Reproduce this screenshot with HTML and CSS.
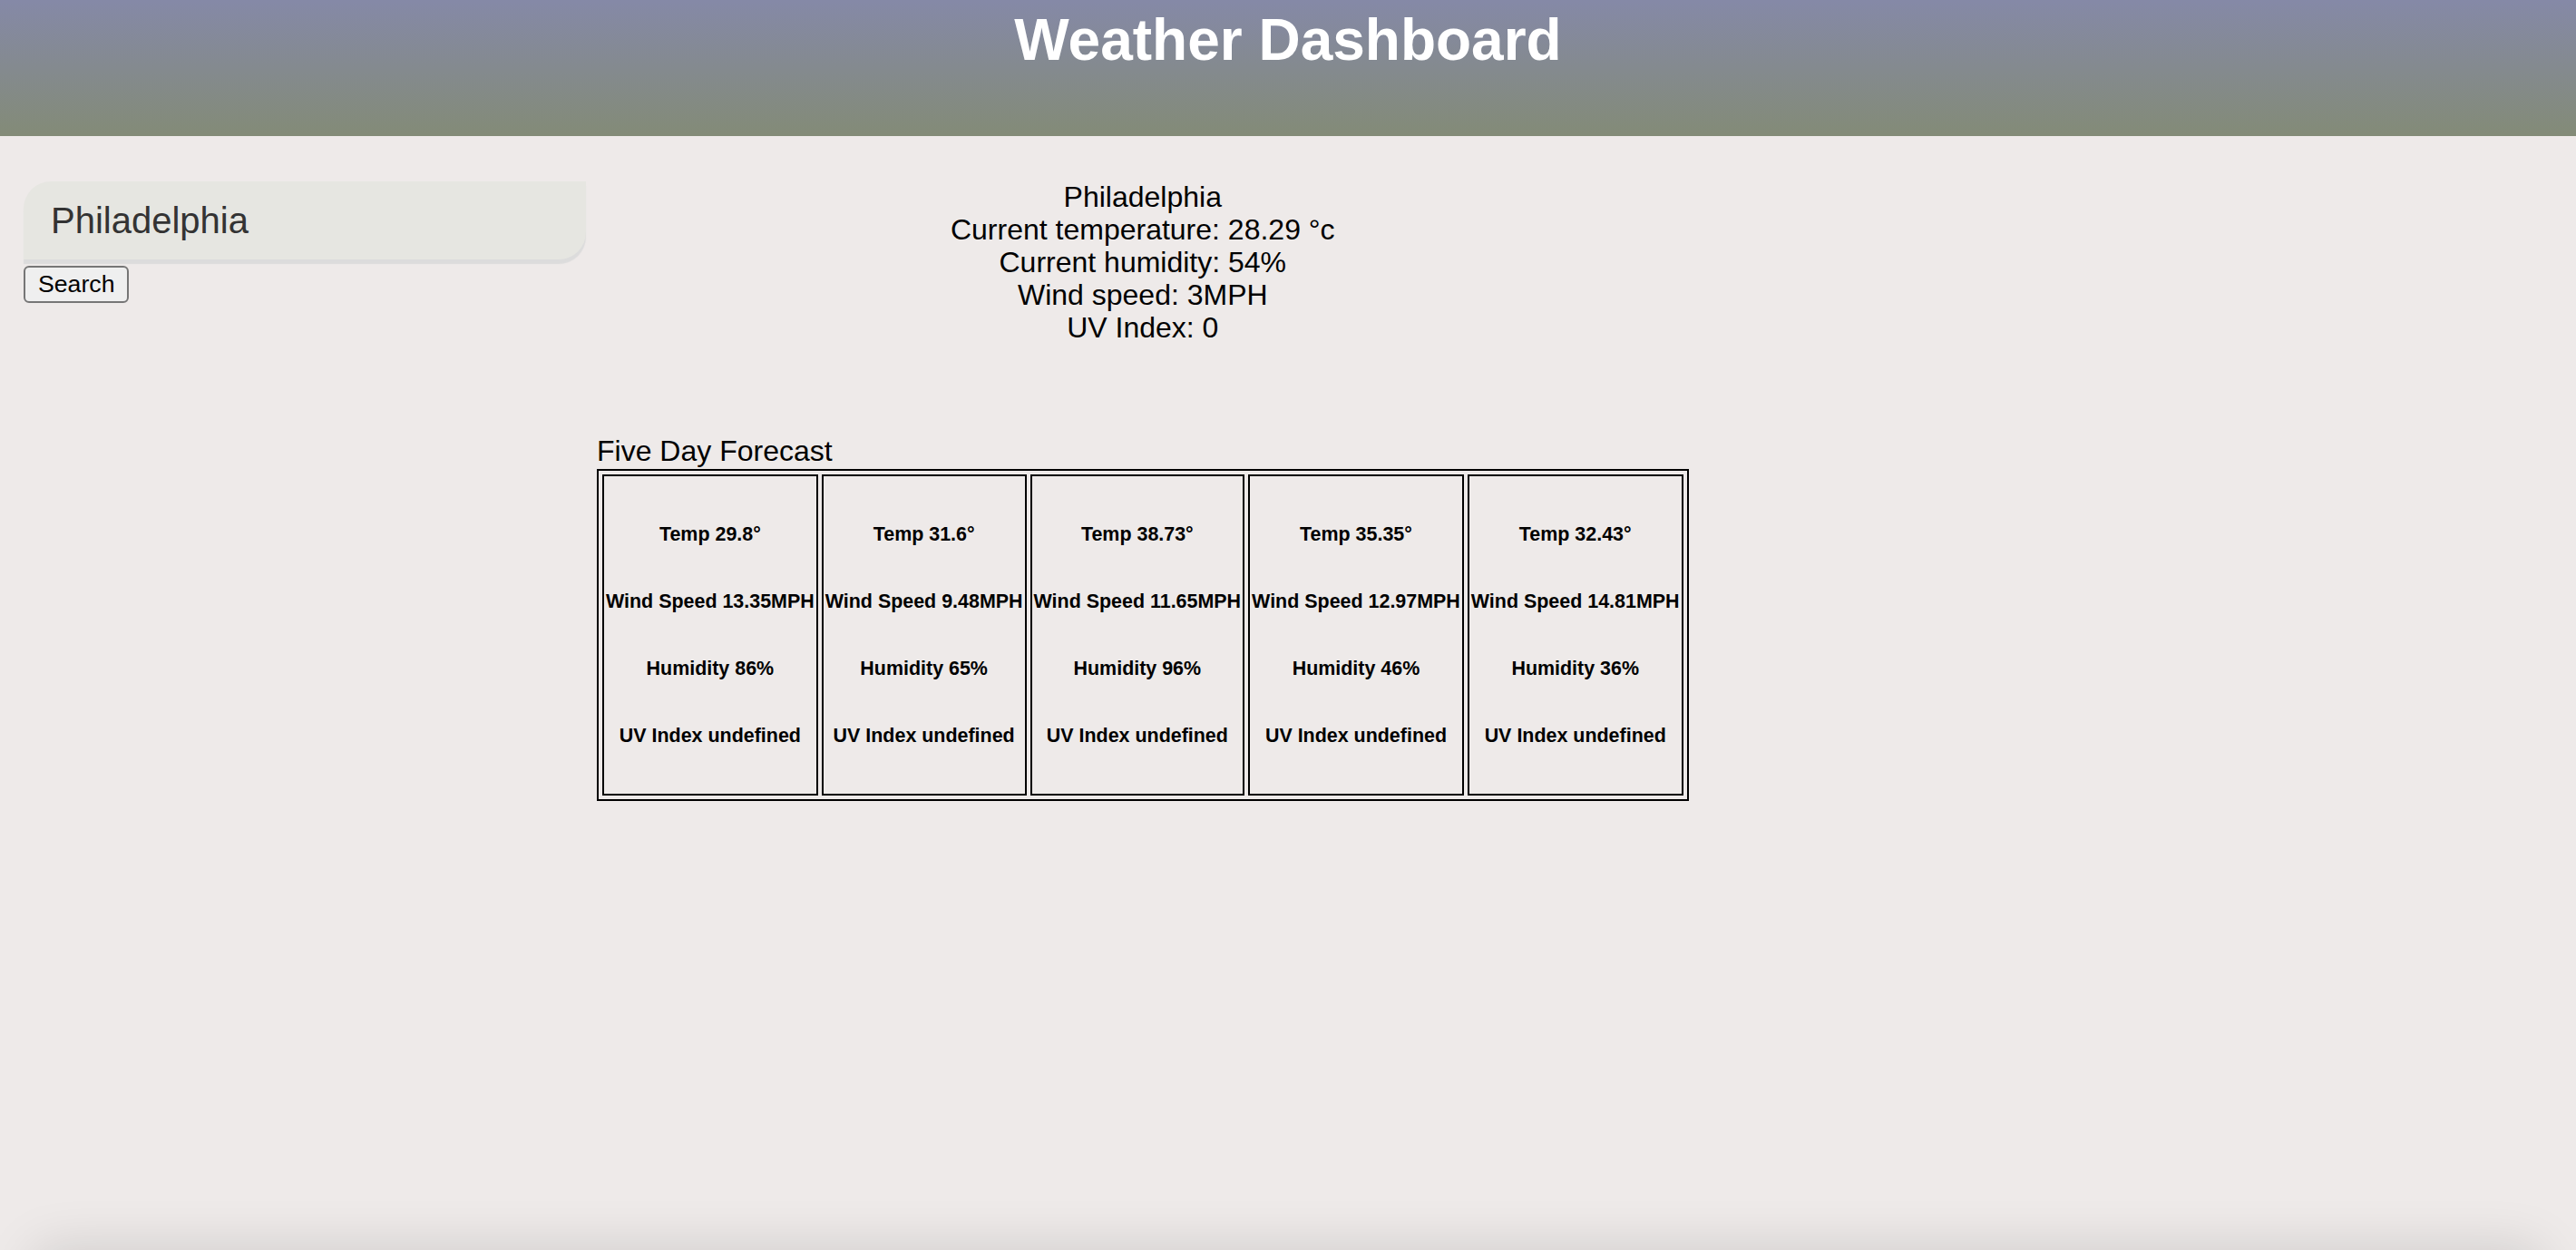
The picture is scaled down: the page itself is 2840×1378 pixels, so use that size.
FILE: index.html
```html
<!DOCTYPE html>
<html lang="en">
<head>
<meta charset="utf-8">
<title>Weather Dashboard</title>
<link rel="stylesheet" href="styles.css">
</head>
<body>
<header class="site-header">
  <h1 class="site-title">Weather Dashboard</h1>
</header>
<div class="layout">
  <aside class="search-panel">
    <input class="city-input" type="text" value="Philadelphia">
    <button class="search-btn" type="button">Search</button>
  </aside>
  <main class="main-col">
    <div class="current">
      <div>Philadelphia</div>
      <div>Current temperature: 28.29 °c</div>
      <div>Current humidity: 54%</div>
      <div>Wind speed: 3MPH</div>
      <div>UV Index: 0</div>
    </div>
    <section class="forecast">
      <div class="forecast-title">Five Day Forecast</div>
      <table class="forecast-table">
        <tr>
          <td class="day">
            <h6 class="stat">Temp 29.8°</h6>
            <h6 class="stat">Wind Speed 13.35MPH</h6>
            <h6 class="stat">Humidity 86%</h6>
            <h6 class="stat">UV Index undefined</h6>
          </td>
          <td class="day">
            <h6 class="stat">Temp 31.6°</h6>
            <h6 class="stat">Wind Speed 9.48MPH</h6>
            <h6 class="stat">Humidity 65%</h6>
            <h6 class="stat">UV Index undefined</h6>
          </td>
          <td class="day">
            <h6 class="stat">Temp 38.73°</h6>
            <h6 class="stat">Wind Speed 11.65MPH</h6>
            <h6 class="stat">Humidity 96%</h6>
            <h6 class="stat">UV Index undefined</h6>
          </td>
          <td class="day">
            <h6 class="stat">Temp 35.35°</h6>
            <h6 class="stat">Wind Speed 12.97MPH</h6>
            <h6 class="stat">Humidity 46%</h6>
            <h6 class="stat">UV Index undefined</h6>
          </td>
          <td class="day">
            <h6 class="stat">Temp 32.43°</h6>
            <h6 class="stat">Wind Speed 14.81MPH</h6>
            <h6 class="stat">Humidity 36%</h6>
            <h6 class="stat">UV Index undefined</h6>
          </td>
        </tr>
      </table>
    </section>
  </main>
</div>
</body>
</html>
```
FILE: styles.css
```css
html, body {
  margin: 0;
  padding: 0;
}
body {
  background: #eeeae9;
  font-family: "Liberation Sans", Arial, Helvetica, sans-serif;
  color: #000;
  min-height: 100vh;
}
body::after {
  content: "";
  position: fixed;
  left: 40px;
  right: 40px;
  bottom: -100px;
  height: 100px;
  box-shadow: 0 0 60px rgba(0, 0, 0, 0.14);
  pointer-events: none;
}
.site-header {
  height: 150px;
  box-sizing: border-box;
  padding-top: 8px;
  background: linear-gradient(to bottom, #8589a7, #838b77);
  text-align: center;
}
.site-title {
  margin: 0;
  font-size: 64px;
  line-height: 72px;
  font-weight: bold;
  color: #fff;
}
.layout {
  display: flex;
  align-items: flex-start;
  gap: 12px;
  padding: 49px 0 0 26px;
}
.search-panel {
  display: flex;
  flex-direction: column;
  align-items: flex-start;
}
.city-input {
  width: 620px;
  height: 86px;
  box-sizing: border-box;
  border: none;
  outline: none;
  margin: 1px 0 0 0;
  padding: 0 0 0 30px;
  background: #e6e6e1;
  color: #333;
  font-family: "Liberation Sans", Arial, sans-serif;
  font-size: 40px;
  border-radius: 30px 0 30px 0;
  box-shadow: 0 5px 1px #dcdcdc;
}
.search-btn {
  margin-top: 7px;
  font-family: "Liberation Sans", Arial, sans-serif;
  font-size: 26.67px;
  line-height: 31px;
  padding: 3px 14px;
  color: #000;
  background: #efefef;
  border: 2px solid #767676;
  border-radius: 6px;
}
.main-col {
  display: flex;
  flex-direction: column;
  width: fit-content;
}
.current {
  text-align: center;
  font-size: 32px;
  line-height: 36px;
}
.forecast {
  margin-top: 100px;
}
.forecast-title {
  font-size: 32px;
  line-height: 36px;
  margin-bottom: 2px;
}
.forecast-table {
  border: 2px solid #000;
  border-spacing: 4px;
}
.day {
  border: 2px solid #000;
  padding: 2px;
  text-align: center;
  vertical-align: middle;
}
.stat {
  font-size: 21.44px;
  line-height: 24px;
  font-weight: bold;
  margin: 50px 0;
  white-space: nowrap;
}
```
